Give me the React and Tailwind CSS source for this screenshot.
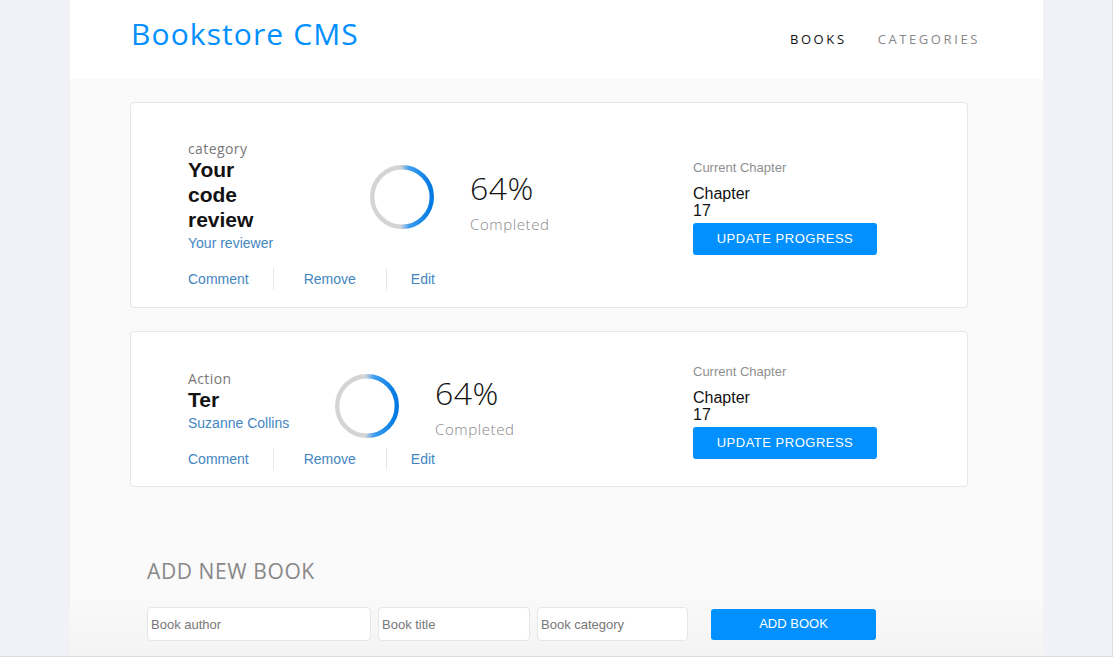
import React from "react";

const books = [
  {
    category: "category",
    title: "Your code review",
    author: "Your reviewer",
    percent: 64,
    chapter: "Chapter 17",
    infoWidth: "w-[182px]",
    height: "h-[206px]",
    ringShift: "",
    actionsGap: "mt-[16px]",
  },
  {
    category: "Action",
    title: "Ter",
    author: "Suzanne Collins",
    percent: 64,
    chapter: "Chapter 17",
    infoWidth: "w-[147px]",
    height: "h-[156px]",
    ringShift: "mt-[4px] -mb-[4px]",
    actionsGap: "mt-[14px]",
  },
];

const heading = "font-['Open_Sans',sans-serif]";
const body = "font-['Liberation_Sans',Arial,sans-serif]";

function Ring({ id, className }) {
  return (
    <svg width="64" height="64" viewBox="0 0 64 64" className={className}>
      <defs>
        <linearGradient id={id} x1="0" y1="0" x2="1" y2="0">
          <stop offset="0" stopColor="#d4d4d4" />
          <stop offset="0.47" stopColor="#d4d4d4" />
          <stop offset="0.62" stopColor="#3d9ef0" />
          <stop offset="1" stopColor="#0078e2" />
        </linearGradient>
      </defs>
      <circle cx="32" cy="32" r="29.8" fill="none" stroke={`url(#${id})`} strokeWidth="4.4" />
    </svg>
  );
}

function BookCard({ book, index }) {
  return (
    <div className={`flex items-center rounded-[4px] border border-[#e6e6e6] bg-white pl-[57px] pr-[90px] ${book.height}`}>
      <div className="flex flex-col pt-[21px]">
        <div className="flex items-center">
          <div className={`flex flex-col ${book.infoWidth}`}>
            <span className={`${heading} text-[14px] leading-4 tracking-[0.4px] text-[#787878]`}>{book.category}</span>
            <h2 className={`${body} max-w-[100px] text-[21px] font-bold leading-[25px] text-[#121212]`}>
              {book.title}
            </h2>
            <span className={`${body} mt-[2px] text-[14px] leading-[18px] text-[#4386bf]`}>{book.author}</span>
          </div>
          <Ring id={`ring-${index}`} className={book.ringShift} />
          <div className="-mb-[4px] ml-[36px] mt-[4px] flex flex-col">
            <span className={`${heading} text-[32px] font-light leading-[38px] tracking-[0.5px] text-[#121212]`}>
              {book.percent}%
            </span>
            <span className={`${heading} mt-[8px] text-[15px] font-light leading-[18px] tracking-[0.6px] text-[#888888]`}>
              Completed
            </span>
          </div>
        </div>
        <div className={`${body} ${book.actionsGap} flex items-center text-[14px] leading-[20px] text-[#4386bf]`}>
          <span className="border-r border-[#e8e8e8] py-[1px] pr-[24px]">Comment</span>
          <span className="border-r border-[#e8e8e8] px-[30px] py-[1px]">Remove</span>
          <span className="py-[1px] pl-[24px]">Edit</span>
        </div>
      </div>
      <div className={`${body} ml-auto mt-[4px] flex w-[184px] flex-col`}>
        <span className="text-[13px] leading-4 text-[#8f8f8f]">Current Chapter</span>
        <span className="mt-[9px] max-w-[70px] text-[16px] leading-[17px] text-[#121212]">{book.chapter}</span>
        <button className="mt-[4px] h-[32px] rounded-[3px] bg-[#0290ff] text-[13px] tracking-[0.5px] text-white">
          UPDATE PROGRESS
        </button>
      </div>
    </div>
  );
}

export default function App() {
  return (
    <div className="h-[659px] w-[1116px] overflow-hidden bg-white">
      <div className="flex h-[657px] w-[1113px] border-r border-b border-[#dcdcdc] bg-[#f1f2f7]">
        <div className="ml-[70px] flex w-[973px] flex-col bg-linear-to-b from-[#fafafa] from-90% to-[#f4f4f4]">
          <header className="flex h-[79px] shrink-0 items-center justify-between bg-white pl-[61px] pr-[63px]">
            <h1 className={`${heading} mb-[12px] text-[30px] leading-[36px] tracking-[1.1px] text-[#0290ff]`}>
              Bookstore CMS
            </h1>
            <nav className={`${heading} flex gap-[31px] text-[13px] tracking-[2.6px]`}>
              <span className="text-[#121212]">BOOKS</span>
              <span className="text-[#888888]">CATEGORIES</span>
            </nav>
          </header>

          <div className="ml-[60px] mt-[23px] flex w-[838px] flex-col gap-[23px]">
            {books.map((book, i) => (
              <BookCard key={book.title} book={book} index={i} />
            ))}
          </div>

          <div className="mt-[72px] pl-[77px]">
            <h3 className={`${heading} text-[21px] leading-[24px] tracking-[0.6px] text-[#888888]`}>ADD NEW BOOK</h3>
            <form className={`${body} mt-[24px] flex items-center text-[13px]`}>
              <input
                placeholder="Book author"
                className="h-[34px] w-[224px] rounded-[4px] border border-[#e6e6e6] bg-white px-[3px] placeholder:text-[#777777]"
              />
              <input
                placeholder="Book title"
                className="ml-[7px] h-[34px] w-[152px] rounded-[4px] border border-[#e6e6e6] bg-white px-[3px] placeholder:text-[#777777]"
              />
              <input
                placeholder="Book category"
                className="ml-[7px] h-[34px] w-[151px] rounded-[4px] border border-[#e6e6e6] bg-white px-[3px] placeholder:text-[#777777]"
              />
              <button
                type="button"
                className="ml-[23px] h-[31px] w-[165px] rounded-[3px] bg-[#0290ff] text-[13px] text-white"
              >
                ADD BOOK
              </button>
            </form>
          </div>
        </div>
      </div>
    </div>
  );
}
